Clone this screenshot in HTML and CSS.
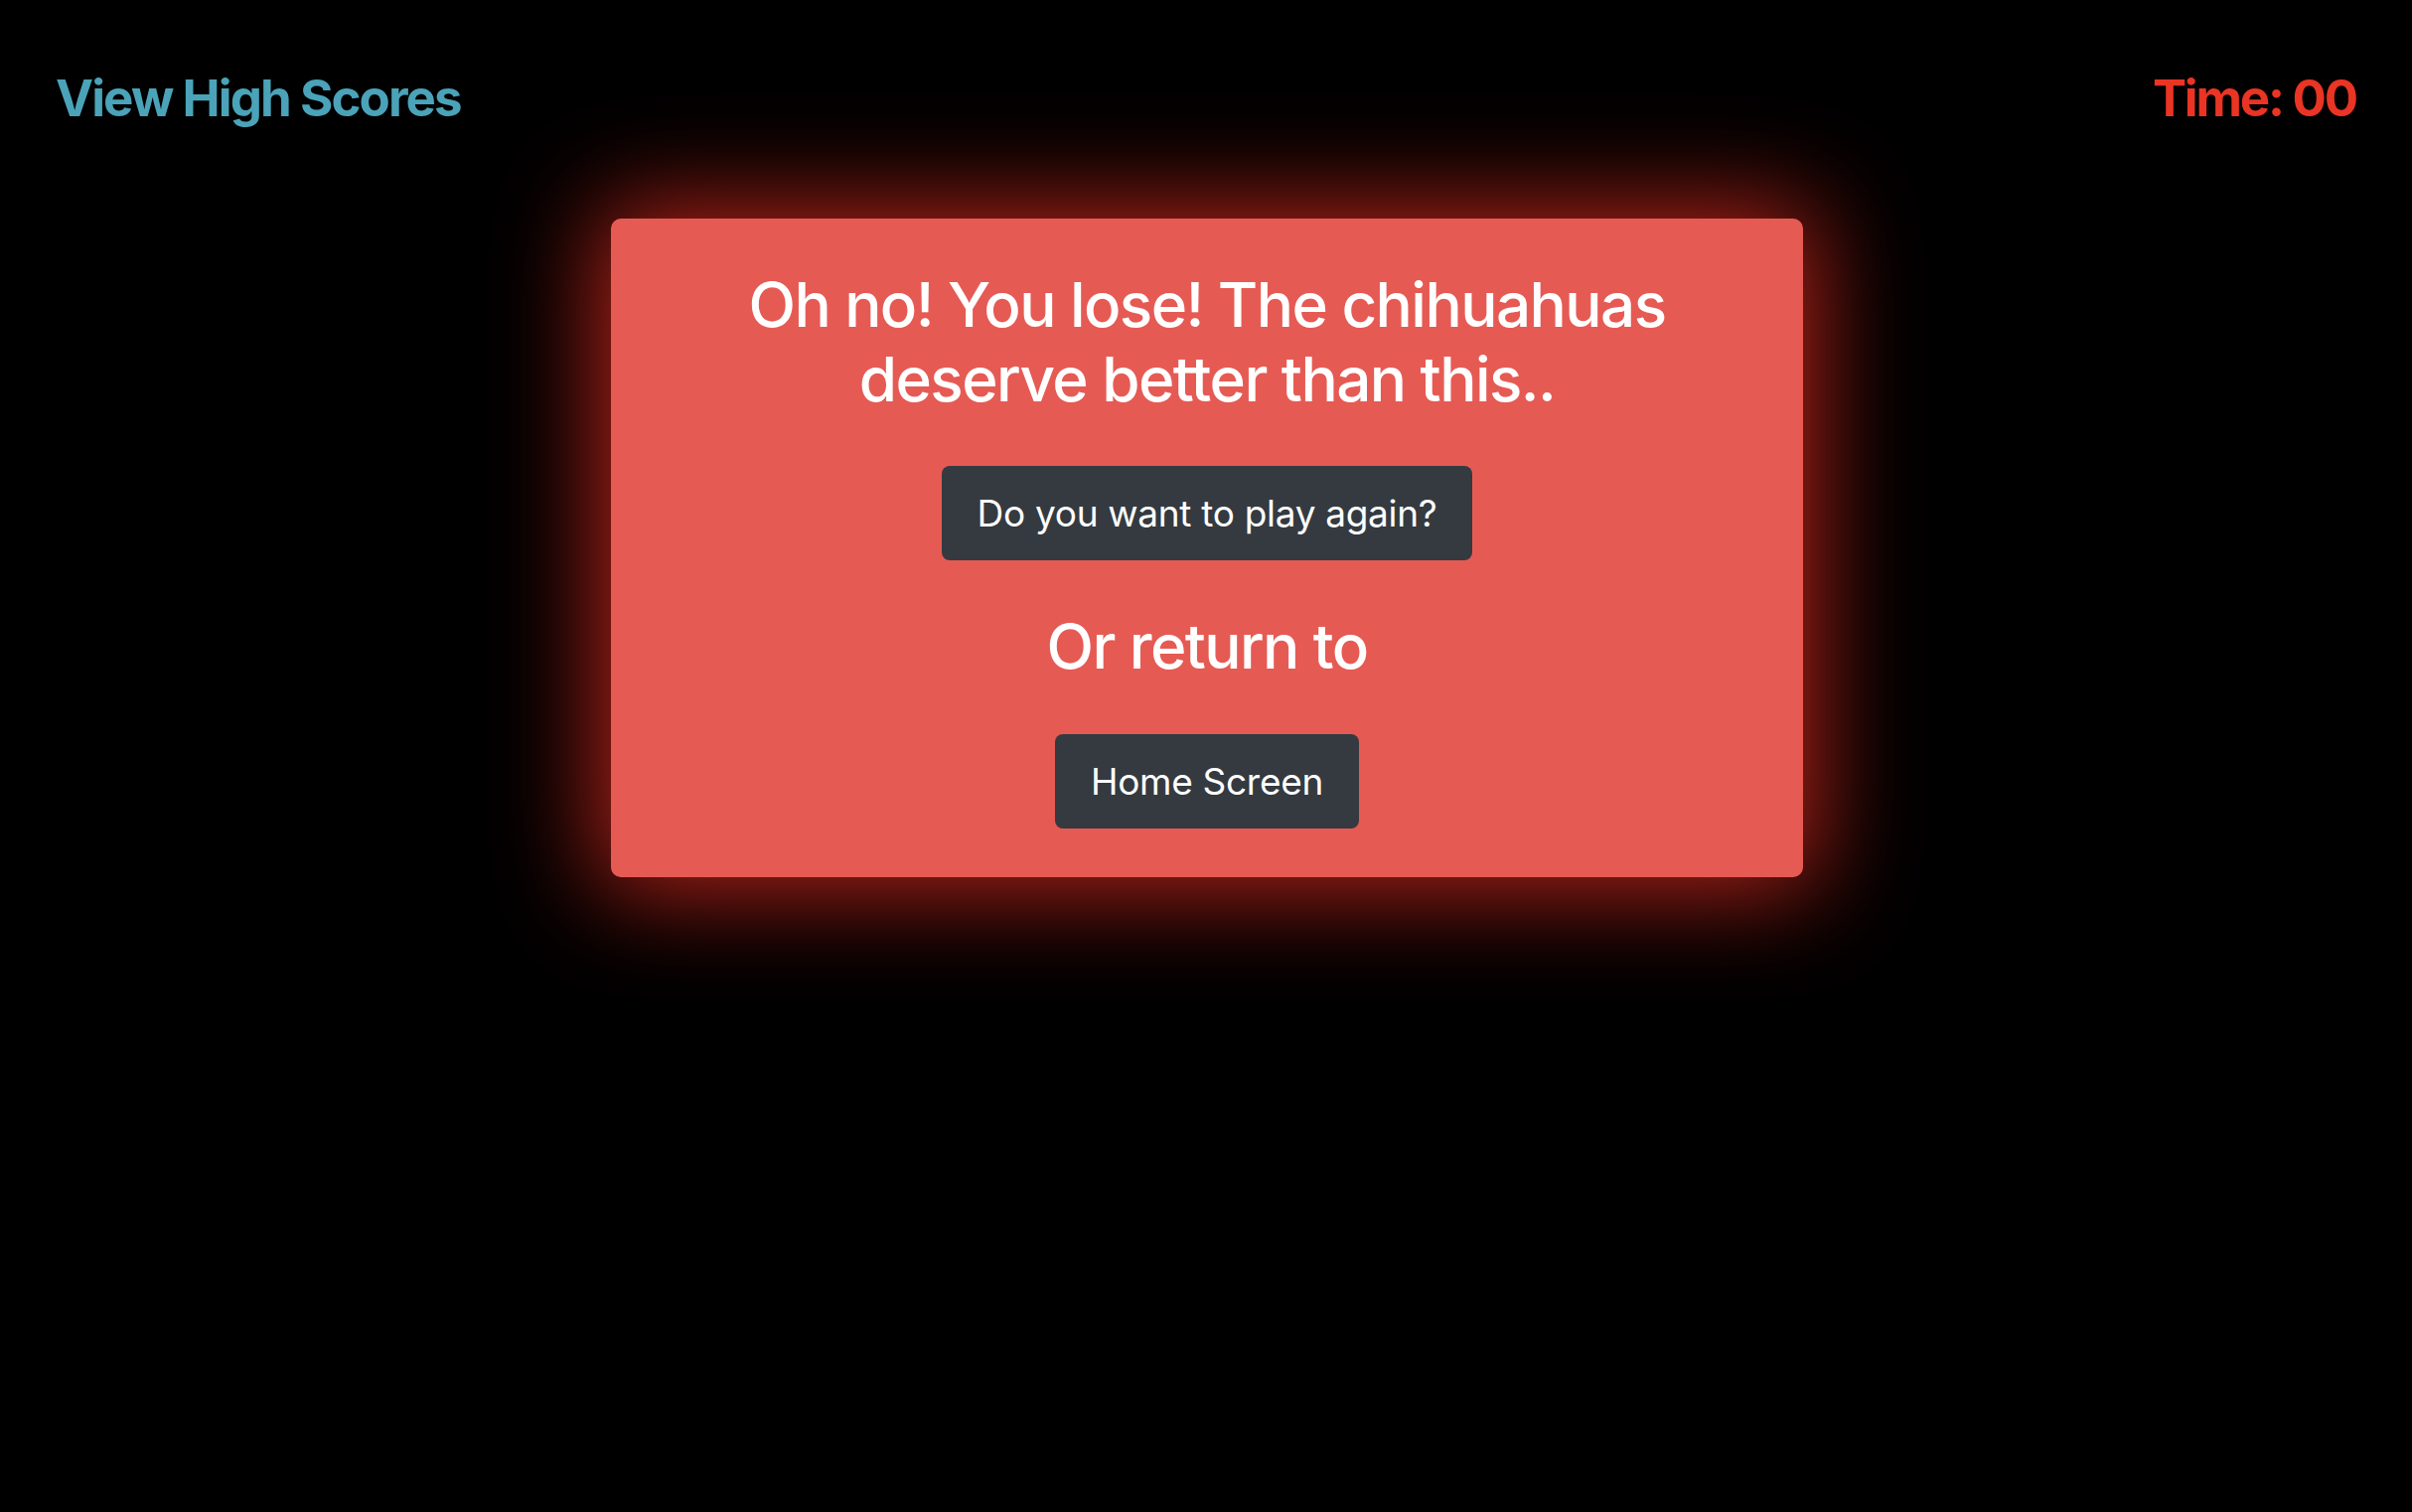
FILE: index.html
```html
<!DOCTYPE html>
<html lang="en">
<head>
<meta charset="utf-8">
<title>Game Over</title>
<link rel="stylesheet" href="styles.css">
</head>
<body>
<header class="topbar">
  <a class="scores-link" href="#">View High Scores</a>
  <div class="timer">Time: 00</div>
</header>
<main class="stage">
  <section class="lose-card">
    <h1 class="lose-title">Oh no! You lose! The chihuahuas deserve better than this..</h1>
    <button class="btn-dark" type="button">Do you want to play again?</button>
    <h2 class="lose-sub">Or return to</h2>
    <button class="btn-dark" type="button">Home Screen</button>
  </section>
</main>
</body>
</html>
```

FILE: styles.css
```css
html, body {
  margin: 0;
  padding: 0;
  background: #000;
  min-height: 100%;
}
body {
  font-family: Inter, "Noto Sans", "Liberation Sans", sans-serif;
  color: #fff;
  width: 2428px;
  height: 1522px;
  overflow: hidden;
  display: flex;
  flex-direction: column;
}
.topbar {
  display: flex;
  justify-content: space-between;
  align-items: flex-start;
  padding: 68px 56px 0 56px;
}
.scores-link {
  font-size: 51px;
  line-height: 1.2;
  font-weight: 700;
  color: #4aa3b8;
  text-decoration: none;
  letter-spacing: -1.9px;
}
.timer {
  font-size: 51px;
  line-height: 1.2;
  font-weight: 700;
  color: #ea3424;
  letter-spacing: -2.2px;
}
.stage {
  display: flex;
  justify-content: center;
  padding-top: 91px;
  padding-left: 2px;
}
.lose-card {
  width: 1200px;
  box-sizing: border-box;
  background: #e65a54;
  border-radius: 10px;
  box-shadow: 0 0 100px 14px #b5231a;
  padding: 50px 80px 49px;
  display: flex;
  flex-direction: column;
  align-items: center;
  gap: 50px;
}
.lose-title, .lose-sub {
  margin: 0;
  font-size: 62px;
  line-height: 1.2;
  font-weight: 500;
  text-align: center;
}
.lose-title {
  max-width: 960px;
  letter-spacing: -1.55px;
}
.lose-sub {
  letter-spacing: -1.6px;
}
.btn-dark {
  font-family: inherit;
  font-size: 37px;
  line-height: 1.5;
  font-weight: 400;
  color: #fff;
  background: #343a40;
  border: none;
  border-radius: 8px;
  padding: 20px 36px;
  cursor: pointer;
  letter-spacing: -0.3px;
}
```
